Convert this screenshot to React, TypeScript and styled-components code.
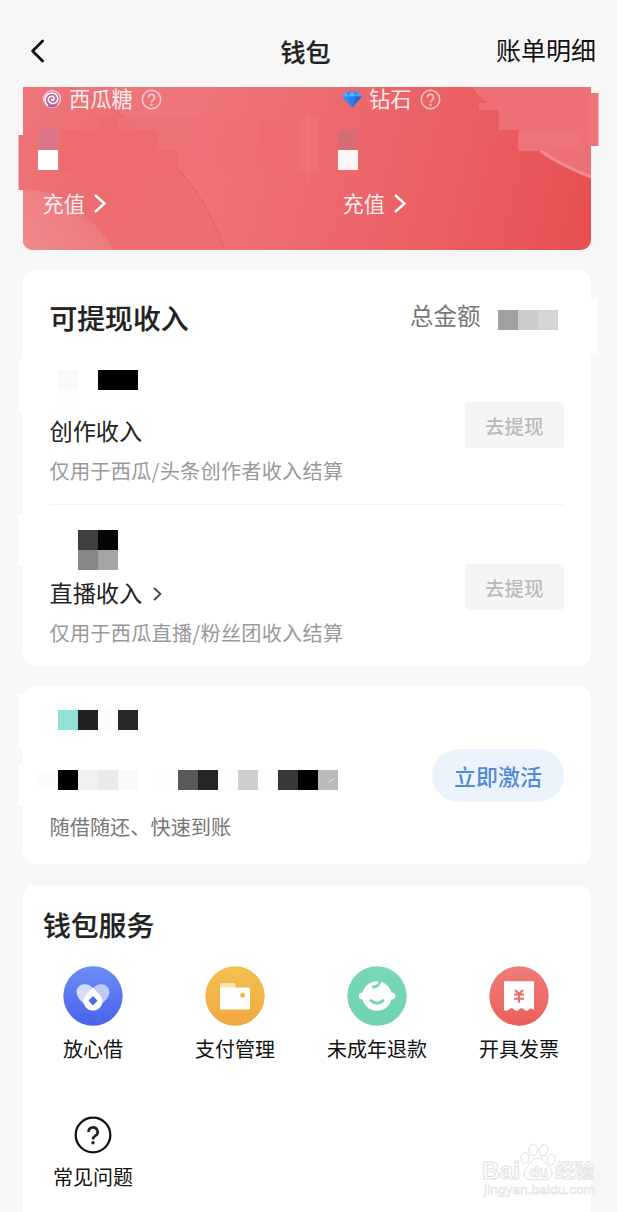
import React from "react";
import styled, { createGlobalStyle } from "styled-components";

const GlobalStyle = createGlobalStyle`
  * { box-sizing: border-box; }
  body { margin: 0; background: #fff; overflow: hidden; }
`;

const Page = styled.div`
  position: relative;
  width: 617px;
  height: 1212px;
  overflow: hidden;
  display: flex;
  flex-direction: column;
  padding-left: 22.5px;
  background: #f7f7f7;
  font-family: "Noto Sans CJK SC", sans-serif;
  color: #222;
`;

const Header = styled.header`
  display: grid;
  grid-template-columns: 1fr auto 1fr;
  align-items: center;
  flex: none;
  height: 87px;
  padding: 13px 21px 0 7px;
`;

const BackIcon = styled.svg`
  margin-top: 1px;
`;

const HeaderTitle = styled.h1`
  margin: 2px 14.5px 0 0;
  font-size: 25px;
  line-height: 32px;
  font-weight: 500;
  -webkit-text-stroke: 0.2px #222;
`;

const HeaderLink = styled.a`
  justify-self: end;
  margin-top: -2px;
  font-size: 25px;
  line-height: 32px;
  color: #111;
`;

const Banner = styled.section`
  position: relative;
  flex: none;
  width: 568px;
  height: 163px;
  display: flex;
  color: #fff;
`;

const BannerArt = styled.svg`
  position: absolute;
  left: -5px;
  top: 0;
`;

const Balance = styled.div`
  position: relative;
  flex: none;
  width: 300px;
  padding-left: 15.5px;
  &:last-child { width: 268px; }
`;

const BalanceLabel = styled.div`
  display: flex;
  align-items: center;
  height: 24px;
  padding-left: 4px;
  font-size: 21.3px;
  line-height: 24px;
  color: rgba(255, 255, 255, 0.88);
  & > span { margin: -2px 8px 0 7px; }
`;

const Recharge = styled.div`
  display: flex;
  align-items: center;
  gap: 9px;
  margin-top: 20px;
  padding-left: 4.5px;
  font-size: 21.3px;
  line-height: 26px;
  color: rgba(255, 255, 255, 0.9);
`;

const Mosaic = styled.div<{ $cols: number; $top?: number; $left?: number }>`
  display: grid;
  grid-template-columns: repeat(${(p) => p.$cols}, 20px);
  grid-auto-rows: 20px;
  margin-top: ${(p) => p.$top ?? 0}px;
  margin-left: ${(p) => p.$left ?? 0}px;
`;

const Cell = styled.i<{ $c: string }>`
  background: ${(p) => p.$c};
`;

const Card = styled.section<{ $h: number; $gap: number }>`
  position: relative;
  flex: none;
  width: 568px;
  height: ${(p) => p.$h}px;
  margin-top: ${(p) => p.$gap}px;
  border-radius: 12px;
  background: #fff;
`;

const Bump = styled.i<{ $y: number; $h: number; $right?: boolean }>`
  position: absolute;
  top: ${(p) => p.$y}px;
  ${(p) => (p.$right ? "right: -7.5px;" : "left: -4.5px;")}
  width: 9px;
  height: ${(p) => p.$h}px;
  background: #fff;
`;

const CardHead = styled.div`
  display: flex;
  justify-content: space-between;
  height: 101px;
  padding: 31px 32.5px 0 27px;
`;

const CardTitle = styled.h2`
  margin: -1px 0 0;
  font-size: 27.8px;
  line-height: 34px;
  font-weight: 500;
  -webkit-text-stroke: 0.2px #222;
`;

const Total = styled.div`
  display: flex;
  gap: 17.5px;
  font-size: 23.5px;
  line-height: 28px;
  color: #777;
`;

const IncomeRow = styled.div<{ $h: number; $line?: boolean }>`
  display: flex;
  justify-content: space-between;
  height: ${(p) => p.$h}px;
  margin: 0 26.5px 0 27px;
  border-bottom: ${(p) => (p.$line ? "1.5px solid #f3f3f3" : "none")};
`;

const IncomeName = styled.div<{ $top: number }>`
  display: flex;
  align-items: center;
  gap: 11px;
  margin-top: ${(p) => p.$top}px;
  font-size: 23.2px;
  line-height: 30px;
  & > svg { margin-top: 3px; }
`;

const Note = styled.p<{ $top: number; $c?: string; $left?: number; $spacing?: number }>`
  margin: ${(p) => p.$top}px 0 0 ${(p) => p.$left ?? 0}px;
  font-size: 20.2px;
  line-height: 26px;
  letter-spacing: ${(p) => p.$spacing ?? 0}px;
  color: ${(p) => p.$c ?? "#999"};
  white-space: nowrap;
`;

const Withdraw = styled.button<{ $top: number }>`
  width: 99.5px;
  height: 46px;
  margin: ${(p) => p.$top}px 0 0;
  padding: 1px 0 0;
  border: 0;
  border-radius: 4px;
  background: #f5f5f5;
  font: 500 19.5px/46px "Noto Sans CJK SC", sans-serif;
  color: #bababa;
`;

const LoanBody = styled.div`
  display: flex;
  justify-content: space-between;
  padding: 0 26.5px 0 15.5px;
`;

const Activate = styled.button`
  width: 132px;
  height: 53px;
  margin-top: 63px;
  padding: 0;
  border: 0;
  border-radius: 27px;
  background: #ebf4fc;
  font: 500 22px/53px "Noto Sans CJK SC", sans-serif;
  color: #5688d8;
`;

const ServiceTitle = styled(CardTitle)`
  padding: 23px 0 0 20.5px;
`;

const Services = styled.div`
  display: grid;
  grid-template-columns: repeat(4, 142px);
  grid-template-rows: 139px auto;
  margin: 25px 0 0 -0.5px;
`;

const Service = styled.div`
  display: flex;
  flex-direction: column;
  align-items: center;
  font-size: 20px;
  line-height: 26px;
  color: #111;
  & > svg { flex: none; margin-bottom: 10px; }
`;

const FaqText = styled.span`
  margin-top: -11px;
`;

const Watermark = styled.div`
  position: absolute;
  left: 482px;
  top: 1140px;
  width: 120px;
`;

const Help = () => (
  <svg width="21" height="21" viewBox="-10.500 -10.500 21 21" fill="none" stroke="#fff" strokeOpacity=".62" strokeWidth="1.600">
    <circle r="9.200" />
    <path d="M-3-1.900A3 3 0 1 1 1.700.3C.6 1.100 0 1.500 0 3" strokeWidth="1.700" />
    <circle cy="5.300" r=".5" />
  </svg>
);

const Chevron = ({ w, h, c, s }: { w: number; h: number; c: string; s: number }) => (
  <svg width={w} height={h} viewBox={`0 0 ${w} ${h}`} fill="none" stroke={c} strokeWidth={s}>
    <path d={`M1 1L${w - 1.5} ${h / 2}L1 ${h - 1}`} />
  </svg>
);

const Swirl = () => (
  <svg width="20" height="20" viewBox="-10 -10 20 20">
    <circle r="9" fill="#f3dcec" />
    <circle r="7.800" fill="#c9669f" />
    <path d="M-7.300 2A7.600 7.600 0 0 0 5 5.800" fill="none" stroke="#8b5fc0" strokeWidth="1.400" />
    <path d="M-4.500 6.200C-9 2-7-5.500-.5-6C5.500-6 7.500 0 4 3.500C.5 6-4.500 3.500-3.500-.5C-2.500-3.500 2.500-3.500 2 .2C1.500 1.600 0 1.500-.2.6" fill="none" stroke="#fff" strokeWidth="1.500" strokeLinecap="round" />
  </svg>
);

const Diamond = () => (
  <svg width="20" height="18" viewBox="0 0 20 18">
    <path d="M4 1.500H16L20 6.500 10 17.500 0 6.500Z" fill="#2f8cf3" />
    <path d="M4 1.500L6 6.500H0ZM10 1.500L14 6.500H6Z" fill="#62aeee" />
    <path d="M16 1.500L20 6.500H14Z" fill="#4f9fec" />
    <path d="M6 6.500H14L10 17.500Z" fill="#2380ee" />
    <path d="M14 6.500H20L10 17.500Z" fill="#2166dc" />
  </svg>
);

const Disc = ({ id, from, to, children }: { id: string; from: string; to: string; children: React.ReactNode }) => (
  <svg width="60" height="60" viewBox="-30 -30 60 60">
    <defs>
      <linearGradient id={id} x1="0" y1="0" x2="0" y2="1">
        <stop offset="0" stopColor={from} />
        <stop offset="1" stopColor={to} />
      </linearGradient>
    </defs>
    <circle r="29.700" fill={`url(#${id})`} />
    {children}
  </svg>
);

const loanPixels = [
  "#fcfcfc", "#000", "#f1f1f1", "#eae8e9", "#f9f9f9", "#fff", "#fdfdfd", "#5a5859",
  "#252525", "#fdfdfd", "#cfcfcf", "#fdfdfd", "#3a3839", "#000",
];

const App = () => (
  <>
    <GlobalStyle />
    <Page>
      <Header>
        <BackIcon width="15" height="24" viewBox="0 0 15 24" fill="none" stroke="#111" strokeWidth="2.800" strokeLinecap="round" strokeLinejoin="round">
          <path d="M12.600 2L2.600 12L12.600 22" />
        </BackIcon>
        <HeaderTitle>钱包</HeaderTitle>
        <HeaderLink>账单明细</HeaderLink>
      </Header>

      <Banner>
        <BannerArt width="582" height="163" viewBox="17.500 87 582 163">
          <defs>
            <linearGradient id="red" gradientUnits="userSpaceOnUse" x1="200" y1="87" x2="600" y2="187">
              <stop offset="0" stopColor="#ee7579" />
              <stop offset=".3" stopColor="#ec6b6e" />
              <stop offset=".65" stopColor="#eb5e61" />
              <stop offset="1" stopColor="#e84f52" />
            </linearGradient>
            <linearGradient id="petal" x1="0" y1="0" x2="1" y2=".7">
              <stop offset="0" stopColor="#ee777b" />
              <stop offset=".5" stopColor="#ec6c70" />
              <stop offset="1" stopColor="#ed6e71" />
            </linearGradient>
            <linearGradient id="glow" x1="0" y1="1" x2="1" y2=".5">
              <stop offset="0" stopColor="#f08a8e" />
              <stop offset="1" stopColor="#ed7679" />
            </linearGradient>
            <clipPath id="clip">
              <path d="M22.500 87H590.500V240A10 10 0 0 1 580.500 250H32.500A10 10 0 0 1 22.500 240Z" />
            </clipPath>
          </defs>
          <g clipPath="url(#clip)">
            <rect x="22" y="87" width="570" height="163" fill="url(#red)" />
            <path d="M22 87H65Q102 100 125 118L180 171Q212 210 224 250H22Z" fill="url(#petal)" />
            <path d="M65 87Q102 100 125 118M180 171Q212 210 224 250" fill="none" stroke="#e35f64" strokeWidth="1.300" strokeOpacity=".6" />
            <path d="M22 189C60 190 90 215 114 250H22Z" fill="url(#glow)" />
            <path d="M472 87H591V177Q562 166 540 151H518V130H498V110H485V101Z" fill="#ec7075" />
            <path d="M540 151Q562 166 591 177" fill="none" stroke="#f28c90" strokeWidth="3.200" />
            <path d="M472 87L485 101" stroke="#f08387" strokeWidth="1" />
          </g>
          <rect x="18" y="135" width="10" height="55" fill="#ed7276" />
          <rect x="588" y="93" width="10" height="53" fill="#ec7378" />
          <path d="M98 118H118V130H158V150H178V171H60V130H98Z" fill="#ec6b6f" />
          <path d="M118 118H138V130H118Z" fill="#ec7074" />
          <path d="M138 118H298V171H178V150H158V130H138Z" fill="#ed7074" fillOpacity=".6" />
          <path d="M258 118H298V171H258Z" fill="#ec6a6d" fillOpacity=".6" />
          <path d="M298 118H318V171H298Z" fill="#ee7275" fillOpacity=".7" />
          <path d="M478 103H518V110H478Z" fill="#ec7076" />
          <path d="M518 130H578V150H518Z" fill="#ed777c" fillOpacity=".5" />
          <path d="M307 114V181" stroke="#f18387" strokeWidth="1.300" strokeOpacity=".45" />
        </BannerArt>
        <Balance>
          <BalanceLabel><Swirl /><span>西瓜糖</span><Help /></BalanceLabel>
          <Mosaic $cols={1} $top={19}><Cell $c="#d97687" /><Cell $c="#fff" /></Mosaic>
          <Recharge><span>充值</span><Chevron w={12} h={19} c="#fff" s={2.4} /></Recharge>
        </Balance>
        <Balance>
          <BalanceLabel><Diamond /><span>钻石</span><Help /></BalanceLabel>
          <Mosaic $cols={1} $top={19}><Cell $c="#d66c74" /><Cell $c="#fff5f4" /></Mosaic>
          <Recharge><span>充值</span><Chevron w={12} h={19} c="#fff" s={2.4} /></Recharge>
        </Balance>
      </Banner>

      <Card $h={396.5} $gap={19.5}>
        <Bump $y={89} $h={54} />
        <Bump $y={244} $h={52} />
        <Bump $y={29} $h={54} $right />
        <CardHead>
          <CardTitle>可提现收入</CardTitle>
          <Total>
            总金额
            <Mosaic $cols={3} $top={9.5}><Cell $c="#a1a1a1" /><Cell $c="#cccccc" /><Cell $c="#d3d7da" /></Mosaic>
          </Total>
        </CardHead>
        <IncomeRow $h={134} $line>
          <div>
            <Mosaic $cols={4} $left={8.5} $top={-0.5}>
              <Cell $c="#f9f9f9" /><Cell $c="#fff" /><Cell $c="#000" /><Cell $c="#000" />
              <Cell $c="#fdfdfd" />
            </Mosaic>
            <IncomeName $top={5}>创作收入</IncomeName>
            <Note $top={13} $spacing={0.22}>仅用于西瓜/头条创作者收入结算</Note>
          </div>
          <Withdraw $top={31.5}>去提现</Withdraw>
        </IncomeRow>
        <IncomeRow $h={160}>
          <div>
            <Mosaic $cols={2} $left={28.5} $top={25.5}>
              <Cell $c="#3f3f3f" /><Cell $c="#050505" /><Cell $c="#878787" /><Cell $c="#a5a5a5" />
            </Mosaic>
            <IncomeName $top={7}>直播收入<Chevron w={9} h={14} c="#444" s={1.8} /></IncomeName>
            <Note $top={13} $spacing={0.22}>仅用于西瓜直播/粉丝团收入结算</Note>
          </div>
          <Withdraw $top={59.4}>去提现</Withdraw>
        </IncomeRow>
      </Card>

      <Card $h={178} $gap={20}>
        <Bump $y={9} $h={54} />
        <Bump $y={79} $h={41} />
        <LoanBody>
          <div>
            <Mosaic $cols={4} $left={20} $top={24}>
              {["#92e3d6", "#222222", "#fbfbfb", "#282828"].map((c, i) => <Cell key={i} $c={c} />)}
            </Mosaic>
            <Mosaic $cols={15} $top={40}>
              {loanPixels.map((c, i) => <Cell key={i} $c={c} />)}
              <svg width="20" height="20" viewBox="0 0 20 20">
                <path d="M0 0H20V20H0Z" fill="#bababa" />
                <path d="M10.500 12.500L16.500 8.500" stroke="#e8e8e8" />
              </svg>
            </Mosaic>
            <Note $top={24} $left={11.5} $c="#777">随借随还、快速到账</Note>
          </div>
          <Activate>立即激活</Activate>
        </LoanBody>
      </Card>

      <Card $h={340} $gap={21}>
        <ServiceTitle>钱包服务</ServiceTitle>
        <Services>
          <Service>
            <Disc id="blue" from="#6a8df5" to="#4a62ec">
              <path d="M0-8C-5-14-16-13-16.500-4C-16.500 3-8 9 0 14C5 9 6-2 0-8Z" fill="#fff" fillOpacity=".74" />
              <path d="M0-8C5-14 16-13 16.500-4C16.500 3 8 9 0 14C-5 9-6-2 0-8Z" fill="#fff" fillOpacity=".6" />
              <path d="M0-8C4-4 9.500 0 9.500 5.200A9.500 9.500 0 0 1-9.500 5.200C-9.500 0-4-4 0-8Z" fill="#fff" />
              <rect x="-3.300" y="-3.300" width="6.600" height="6.600" rx=".6" transform="translate(0 4.700) rotate(45)" fill="#4c6bea" />
            </Disc>
            放心借
          </Service>
          <Service>
            <Disc id="gold" from="#f4c052" to="#f0a83f">
              <path d="M-15-11.500a1.500 1.500 0 0 1 1.500-1.500H-1a1.500 1.500 0 0 1 1.500 1.500V-8H-15Z" fill="#fce3ae" />
              <path d="M-15-8.500H13.500a1.500 1.500 0 0 1 1.500 1.500V12a1.500 1.500 0 0 1-1.500 1.500H-13.500A1.500 1.500 0 0 1-15 12Z" fill="#fff" />
              <circle cx="7.700" cy="-.8" r="2.500" fill="#f3b548" />
            </Disc>
            支付管理
          </Service>
          <Service>
            <Disc id="green" from="#79d6b8" to="#70d3b3">
              <circle r="14.800" fill="#fff" />
              <circle cx="-14.700" r="3.600" fill="#fff" />
              <circle cx="14.700" r="3.600" fill="#fff" />
              <path d="M2.500-15.500C3-11.500 1-9.500-3.500-9" fill="none" stroke="#75d5b6" strokeWidth="2.800" strokeLinecap="round" />
              <path d="M-6 4.700Q0 9.800 6 4.700" fill="none" stroke="#75d5b6" strokeWidth="3" strokeLinecap="round" />
            </Disc>
            未成年退款
          </Service>
          <Service>
            <Disc id="coral" from="#ed7d7a" to="#ec5e59">
              <path d="M-15-14.700H15V14.300Q12.500 11 10 13.500Q7.500 16 5 13.500Q2.500 11 0 13.500Q-2.500 16-5 13.500Q-7.500 11-10 13.500Q-12.500 15.500-15 14.300Z" fill="#fff" />
              <path d="M-4-6L0-2.300L4-6M0-2V6.500M-5-1.500H5M-5 2.700H5" fill="none" stroke="#ec6b68" strokeWidth="2.100" />
            </Disc>
            开具发票
          </Service>
          <Service>
            <svg width="60" height="60" viewBox="-30 -30 60 60" fill="none" stroke="#111" strokeWidth="2.300">
              <circle r="17.300" />
              <path d="M-4.400-2.800A4.500 4.500 0 1 1 2.500.7C.8 1.900 0 2.500 0 4.500" stroke="#222" strokeWidth="2.700" />
              <circle cy="7.700" r="1.700" fill="#222" stroke="none" />
            </svg>
            <FaqText>常见问题</FaqText>
          </Service>
        </Services>
      </Card>

      <Watermark>
        <svg width="120" height="62" viewBox="0 0 120 62" fill="#fff" stroke="#e0e0e0" strokeWidth="1">
          <ellipse cx="43" cy="18" rx="4" ry="5.500" />
          <ellipse cx="51" cy="10" rx="4.300" ry="5.800" />
          <ellipse cx="61.500" cy="10.500" rx="4.300" ry="5.800" transform="rotate(10 61.500 10.500)" />
          <ellipse cx="69.500" cy="19.500" rx="4" ry="5.500" />
          <path d="M56 18C62 18 63 23 67 27C72 32 71 39 63 40Q56 39 49 40C41 39 40 32 45 27C49 23 50 18 56 18Z" />
          <g fontFamily="Liberation Sans, sans-serif" fontWeight="700">
            <text x="0" y="38.500" fontSize="24" textLength="38" lengthAdjust="spacingAndGlyphs">Bai</text>
            <text x="47.500" y="37" fontSize="15" strokeWidth=".8">du</text>
            <text x="73" y="37.500" fontSize="19.500" strokeWidth=".8" fontFamily="Noto Sans CJK SC, sans-serif">经验</text>
          </g>
          <text x="2" y="54" fontFamily="Liberation Sans, sans-serif" fontSize="13.500" textLength="111" strokeWidth=".6">jingyan.baidu.com</text>
        </svg>
      </Watermark>
    </Page>
  </>
);

export default App;
